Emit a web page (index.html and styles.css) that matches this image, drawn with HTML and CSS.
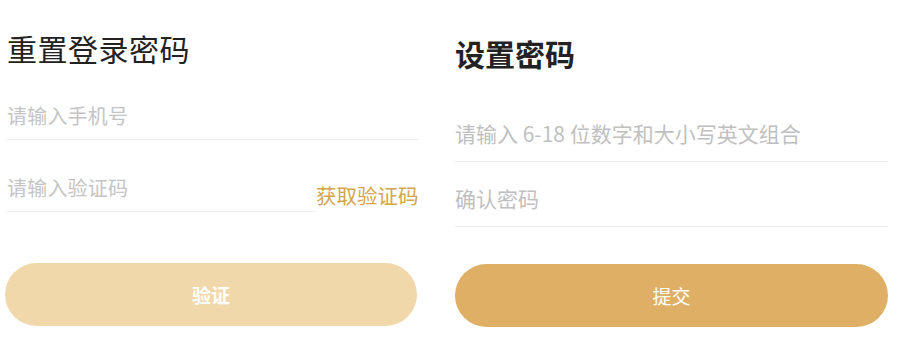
FILE: index.html
```html
<!DOCTYPE html>
<html lang="zh-CN">
<head>
<meta charset="utf-8">
<title>重置登录密码</title>
<link rel="stylesheet" href="styles.css">
</head>
<body>
<div class="page">
  <section class="panel panel-reset">
    <h1 class="title">重置登录密码</h1>
    <div class="field"><span class="placeholder">请输入手机号</span></div>
    <div class="code-row">
      <div class="field field-code"><span class="placeholder">请输入验证码</span></div>
      <span class="get-code">获取验证码</span>
    </div>
    <button class="btn btn-light">验证</button>
  </section>
  <section class="panel panel-set">
    <h1 class="title title-bold">设置密码</h1>
    <div class="field field-lg field-first"><span class="placeholder">请输入 6-18 位数字和大小写英文组合</span></div>
    <div class="field field-lg field-second"><span class="placeholder">确认密码</span></div>
    <button class="btn btn-solid">提交</button>
  </section>
</div>
</body>
</html>
```
FILE: styles.css
```css
* { box-sizing: border-box; }
html, body {
  margin: 0;
  padding: 0;
  background: #ffffff;
}
body {
  font-family: "Noto Sans CJK SC", "Noto Sans", sans-serif;
  color: #222222;
}
.page {
  display: flex;
  align-items: flex-start;
  width: 900px;
  height: 364px;
  overflow: hidden;
}
.panel {
  display: flex;
  flex-direction: column;
}
.panel-reset {
  margin-left: 5px;
  width: 414px;
}
.panel-set {
  margin-left: 36px;
  width: 433px;
}
.title {
  margin: 0;
  font-size: 30px;
  line-height: 40px;
  font-weight: 400;
  color: #222222;
  letter-spacing: 0.5px;
}
.panel-reset .title {
  margin-top: 28px;
  margin-left: 2px;
}
.title-bold {
  margin-top: 33px;
  font-weight: 600;
  letter-spacing: 0;
}
.field {
  border-bottom: 1px solid #ededed;
  padding-bottom: 9px;
}
.panel-reset .field {
  margin-left: 2px;
  margin-top: 34px;
}
.placeholder {
  display: block;
  font-size: 20px;
  line-height: 28px;
  color: #c4c4c4;
  letter-spacing: 0.2px;
}
.code-row {
  display: flex;
  align-items: flex-start;
}
.panel-reset .field-code {
  width: 309px;
}
.get-code {
  margin-top: 41px;
  font-size: 20.5px;
  line-height: 28px;
  color: #d3a54d;
}
.field-lg .placeholder {
  font-size: 21px;
  color: #bfbfbf;
  letter-spacing: 0;
}
.field-lg {
  padding-bottom: 14px;
}
.field-first {
  margin-top: 46px;
}
.field-second {
  margin-top: 22px;
}
.btn {
  display: flex;
  align-items: center;
  justify-content: center;
  height: 63px;
  border: none;
  border-radius: 32px;
  color: #ffffff;
  font-family: "Noto Sans CJK SC", sans-serif;
  font-size: 19px;
  padding: 0;
}
.btn-light {
  margin-top: 51px;
  width: 412px;
  background: #f1d8ab;
  font-weight: 700;
}
.btn-solid {
  margin-top: 37px;
  width: 433px;
  background: #dfaf66;
  font-weight: 400;
}
```
